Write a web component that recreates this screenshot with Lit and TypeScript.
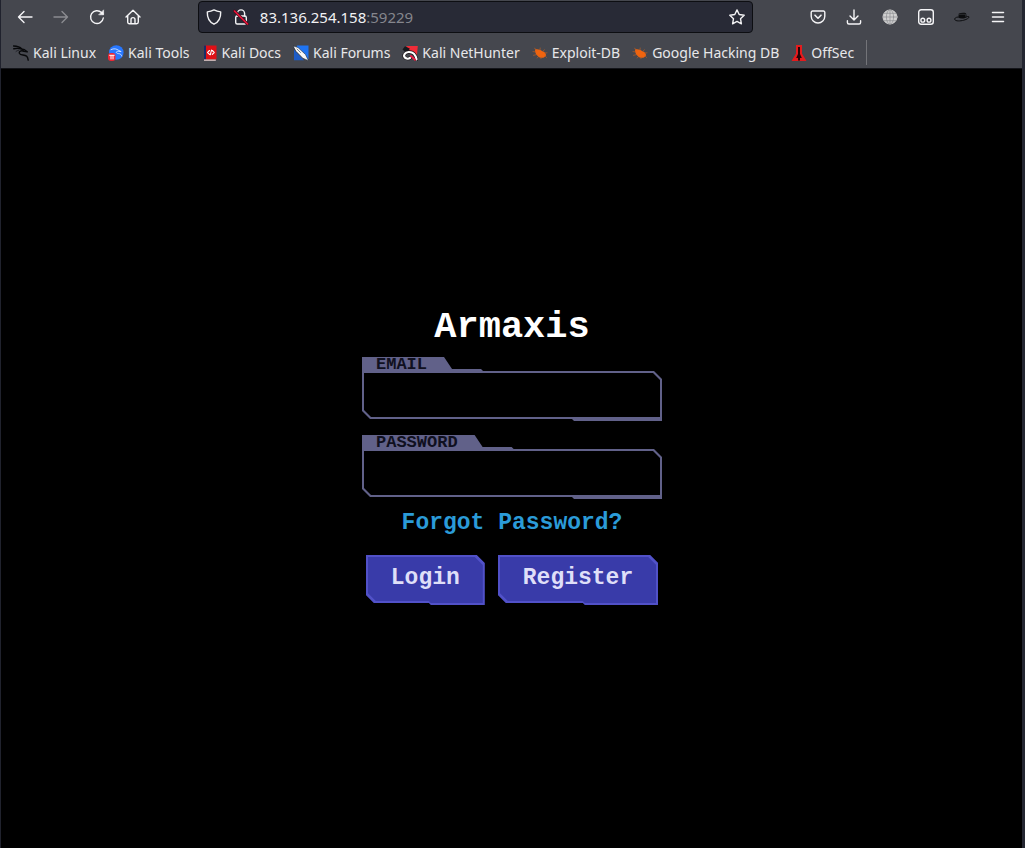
import { LitElement, html, css, svg } from "lit";
import { customElement, property } from "lit/decorators.js";

const line = (body: unknown) => html`<svg width="16" height="16" viewBox="0 0 16 16" fill="none" stroke="currentColor" stroke-width="1.4" stroke-linecap="round" stroke-linejoin="round" aria-hidden="true">${body}</svg>`;

const icons = {
  back: line(svg`<path d="M15 8H1.5M7 2.5 1.5 8 7 13.5"/>`),
  forward: line(svg`<path d="M1 8h13.5M9 2.5 14.5 8 9 13.5"/>`),
  reload: line(svg`<path d="M14.3 9A6.4 6.4 0 1 1 12.5 3.6L14 5"/><path d="M14.6 1.2v4.6H10z" fill="currentColor" stroke-width=".6"/>`),
  home: line(svg`<path d="M1 8 8 1.2 15 8M2.7 6.8V13a1.7 1.7 0 0 0 1.7 1.7h7.2a1.7 1.7 0 0 0 1.7-1.7V6.8M6 14.5V10.6a2 2 0 0 1 4 0v3.9"/>`),
  shield: line(svg`<path d="M8 .9c2.2 1.2 4.1 1.7 6.7 2C14.9 8.600 12.7 12.900 8 15.200 3.300 12.900 1.100 8.600 1.300 2.900 3.900 2.600 5.800 2.100 8 .9z"/>`),
  lock: line(svg`<path d="M4.400 7V4.500a3.600 3.600 0 0 1 7.200 0V7"/><rect x="2.700" y="7" width="10.600" height="8" rx="1.500"/><path d="M1.500 2 14.500 15" stroke="#45121f" stroke-width="3"/><path d="M1.500 2 14.500 15" stroke="#f0143c" stroke-width="1.500"/>`),
  star: line(svg`<path d="m8 .9 2.200 4.600 5 .7-3.700 3.500.9 5.100L8 12.400l-4.400 2.400.9-5.100L.8 6.200l5-.7z"/>`),
  pocket: line(svg`<path d="M2.500 2h11A1.300 1.300 0 0 1 14.800 3.300V7.200a6.800 6.800 0 0 1-13.600 0V3.300A1.300 1.300 0 0 1 2.500 2z"/><path d="m5 6.200 3 3 3-3" stroke-width="1.600"/>`),
  download: line(svg`<path d="M8 1v9.500M4 7l4 4 4-4M1.400 11.700v1.800a1.500 1.500 0 0 0 1.500 1.500h10.200a1.500 1.500 0 0 0 1.500-1.500v-1.800"/>`),
  globe: line(svg`<circle cx="8" cy="8" r="7" fill="#d0d0d0" stroke="#d0d0d0" stroke-width="1"/><g stroke="#8c8e92" stroke-width=".7"><ellipse cx="8" cy="8" rx="3.600" ry="7.200"/><path d="M8 .8v14.400M.8 8h14.400M2 4.300h12M2 11.700h12"/></g>`),
  tamper: line(svg`<rect x=".7" y=".7" width="14.600" height="14.600" rx="2.500"/><circle cx="4.800" cy="11.200" r="1.900"/><circle cx="11" cy="11.200" r="1.900"/>`),
  hat: line(svg`<path d="M4.300 8.800 4.800 4.600c2-.8 5-1 7.200-.4l.9 4c-2.500 1.600-6 1.700-8.600.6z" fill="#0c0d0f" stroke="none"/><path d="M4 8C1.500 8.200.3 9.500.8 10.600c.8 1.700 5.500 1.600 9 .6 3-.8 5.300-2.300 5.300-3.200 0-.5-.9-.6-2-.4" stroke="#0c0d0f" stroke-width="1"/><path d="M5.500 5.300h6.200v2" stroke="#3b3d42" stroke-width=".7"/>`),
  menu: line(svg`<path d="M2.500 3.500h11M2.500 8h11M2.500 12.500h11" stroke-width="1.500"/>`),
  dragon: line(svg`<g stroke="#08090b" stroke-width="1.400"><path d="M.5 1c3 .2 6 .4 8 2.800M.8 3.800c2.500-.6 5-.5 7.700.2M8.500 4l3 .8 2.800 2-3.300-.4C8.500 5 5.500 6.300 6.500 8.500c1 2 5 1 7 2.600 1 .9 1.500 2.500 1.700 4"/><path d="M3 6.500c1-.8 1.600-1 2.500-1.100" stroke-width=".6"/></g>`),
  tools: line(svg`<circle cx="8.300" cy="7.500" r="7.300" fill="#2777ff" stroke="none"/><path d="M3 4.600c3-1.500 5.700-.8 7.700.8l2.500 1.200-3-.3c-2.500 0-2.500 2 .2 2.300 2 .2 3 .9 3.400 2.500" stroke="#e8f0ff" stroke-width=".8"/><rect x="0" y="8" width="7.500" height="8" rx="3" fill="#ee2635" stroke="none"/><path d="M1.600 10.300h4.600M3 10.500v3.500M5 10.500v3.500" stroke="#fff" stroke-width="1"/>`),
  docs: line(svg`<rect x="2" y=".5" width="12.500" height="14" fill="#df1016" stroke="none"/><path d="M2 .5h2v14H2z" fill="#172e68" stroke="none"/><path d="M2 14.500h11.800v1.300H2z" fill="#e5cccb" stroke="none"/><path d="M7.500 5.500 5.600 7.500l1.900 1.900M9.500 5.100 8.300 9.800M10.300 5.500l1.900 2-1.900 1.900" stroke="#fff" stroke-width="1.100"/>`),
  forums: line(svg`<path d="M4 .5h11.500v13.500L13 15 3 4z" fill="#1f74f2" stroke="none"/><path d="M1 4.500v10.800h10z" fill="#1e5cc7" stroke="none"/><path d="M.3 1 5 2.500l7.500 7 3 6.200-5.700-2.500L3 6.300z" fill="#f8f8f8" stroke="#26313c" stroke-width=".6"/><path d="m4 4 3.500 3.500" stroke="#59646f" stroke-width=".8"/>`),
  nethunter: line(svg`<path d="M4 1h11.800L14.800 12 8 6z" fill="#f02c38" stroke="none"/><path d="M.5 4.500 3 1.200l5 2.600-4 4z" fill="#16191d" stroke="none"/><path d="M14.500 14.300C13.500 9.500 10.500 6.800 6.700 7 2.700 7.500 1 10.300 2.700 12.400c1.500 1.500 4 1.500 5.300.6" stroke="#191114" stroke-width="3.400"/><path d="M14.500 14.300C13.500 9.500 10.500 6.800 6.700 7 2.700 7.500 1 10.300 2.700 12.400c1.500 1.500 4 1.500 5.300.6" stroke="#fff" stroke-width="2.200"/><path d="m9 11 4 3.800" stroke="#e51e43" stroke-width="2"/>`),
  bug: line(svg`<path d="M3 4.500c2.500-.7 5.300 0 7 1.600l3 1.400 1.200 2.700-2.200 2.300c-2 .8-4.700.2-6-1.300C4 10 3 7.500 3 4.500z" fill="#f0640f" stroke="none"/><path d="M5 5 2.500 3.300M4 7 1 6.600M5 9.500l-3.500.8M7 11l-1.800 2M9.500 12l-.6 1.700M8 5.300 8.200 3M11 6.500l1.300-1.800M13 8l2-.2M13 11l1.600 1.500" stroke="#c9601f" stroke-width=".6"/>`),
  offsec: line(svg`<path d="M5 0h6v8.500l4.500 7.500H.5L5 8.500z" fill="#e31b1d" stroke="none"/><path d="M7 2h2v7l1.800 4H9v2.500H7V13H5.200L7 9z" fill="#250507" stroke="none"/>`),
};

@customElement("tool-button")
class ToolButton extends LitElement {
  @property() label = "";
  @property() icon: keyof typeof icons = "menu";
  @property({ type: Boolean }) disabled = false;
  static styles = css`
    :host { display: block; }
    button { display: grid; place-items: center; width: 36px; height: 34px; padding: 0; border: 0; background: none; color: #f5f5f7; }
    button:disabled { color: #8b8c91; }
    svg { display: block; }
  `;
  render() {
    return html`<button aria-label=${this.label} ?disabled=${this.disabled}>${icons[this.icon]}</button>`;
  }
}

@customElement("browser-chrome")
class BrowserChrome extends LitElement {
  static styles = css`
    :host { display: block; background: #45474e; color: #f2f2f4; font-family: "Noto Sans", sans-serif; border-bottom: 1px solid #14151a; }
    .toolbar { display: flex; padding: 0 6px; }
    .group { display: flex; }
    .space { flex: 48; }
    .address { flex: 553; display: flex; align-items: center; gap: 11px; height: 32px; margin-top: 1px; padding: 0 7px; box-sizing: border-box; border: 1px solid #0d0e12; border-radius: 4px; background: #282a36; }
    .address svg { display: block; flex: none; }
    .url { position: relative; flex: 1; display: flex; height: 24px; }
    .url input { width: 100%; padding: 0; border: 0; background: none; color: transparent; font: 15px/24px "Noto Sans", sans-serif; outline: 0; }
    .parts { position: absolute; inset: 0; font-size: 15px; line-height: 24px; pointer-events: none; }
    .port { color: #85868d; }
    .star { padding: 0; border: 0; background: none; color: inherit; }
    .bookmarks { display: flex; align-items: center; gap: 12px; height: 34px; padding: 3px 12px 0; box-sizing: border-box; white-space: nowrap; }
    .bookmarks a { display: flex; align-items: center; gap: 4px; color: #e8e8ea; text-decoration: none; font-size: 14px; line-height: 20px; }
    .divider { width: 1px; height: 25px; background: #737479; }
  `;
  private bookmarks: [keyof typeof icons, string][] = [
    ["dragon", "Kali Linux"], ["tools", "Kali Tools"], ["docs", "Kali Docs"], ["forums", "Kali Forums"],
    ["nethunter", "Kali NetHunter"], ["bug", "Exploit-DB"], ["bug", "Google Hacking DB"], ["offsec", "OffSec"],
  ];
  render() {
    return html`
      <div class="toolbar">
        <div class="group">
          <tool-button label="Back" icon="back"></tool-button>
          <tool-button label="Forward" icon="forward" disabled></tool-button>
          <tool-button label="Reload" icon="reload"></tool-button>
          <tool-button label="Home" icon="home"></tool-button>
        </div>
        <span class="space"></span>
        <div class="address">
          ${icons.shield}${icons.lock}
          <div class="url">
            <input aria-label="Address" />
            <span class="parts">83.136.254.158<span class="port">:59229</span></span>
          </div>
          <button class="star" aria-label="Bookmark this page">${icons.star}</button>
        </div>
        <span class="space"></span>
        <div class="group">
          <tool-button label="Save to Pocket" icon="pocket"></tool-button>
          <tool-button label="Downloads" icon="download"></tool-button>
          <tool-button label="Proxy" icon="globe"></tool-button>
          <tool-button label="Scripts" icon="tamper"></tool-button>
          <tool-button label="Hat extension" icon="hat"></tool-button>
          <tool-button label="Menu" icon="menu"></tool-button>
        </div>
      </div>
      <nav class="bookmarks">
        ${this.bookmarks.map(([icon, name]) => html`<a href="#">${icons[icon]}<span>${name}</span></a>`)}
        <span class="divider"></span>
      </nav>`;
  }
}

@customElement("framed-field")
class FramedField extends LitElement {
  @property() label = "";
  @property() type = "text";
  static styles = css`
    :host { display: block; }
    label {
      display: block; width: fit-content; height: 14px; padding: 0 56px 0 14px; background: #616189; color: #101020;
      font: bold 17px/16px "Liberation Mono", monospace; text-transform: uppercase;
      clip-path: polygon(0 0, calc(100% - 39px) 0, calc(100% - 31px) 12px, calc(100% - 2px) 12px, 100% 14px, 0 14px);
    }
    .frame {
      padding: 2px 2px 4px; background: #616189;
      clip-path: polygon(0 0, calc(100% - 8px) 0, 100% 8px, 100% 100%, calc(70% + 2px) 100%, 70% calc(100% - 2px), 8px calc(100% - 2px), 0 calc(100% - 10px));
    }
    input {
      display: block; box-sizing: border-box; width: 100%; height: 44px; padding: 0 14px; border: 0; outline: 0; border-radius: 0; background: #000; color: #e0e0ff;
      font: bold 17px/20px "Liberation Mono", monospace;
      clip-path: polygon(0 0, calc(100% - 7px) 0, 100% 7px, 100% 100%, 7px 100%, 0 calc(100% - 7px));
    }
  `;
  render() {
    return html`<label for="field">${this.label}</label><div class="frame"><input id="field" type=${this.type} /></div>`;
  }
}

@customElement("login-panel")
class LoginPanel extends LitElement {
  static styles = css`
    :host { display: block; width: 300px; font-family: "Liberation Mono", monospace; font-weight: bold; }
    form { display: flex; flex-direction: column; gap: 14px; }
    h1 { margin: 0; color: #fff; font-size: 37px; line-height: 31px; text-align: center; }
    .forgot { align-self: center; color: #2b9bd8; font-size: 23px; line-height: 20px; text-decoration: none; white-space: nowrap; }
    .actions { display: flex; justify-content: center; gap: 13px; padding-top: 8px; }
    .actions button {
      position: relative; isolation: isolate; height: 50px; padding: 0 25px 4px; border: 0; background: #5151c8; color: #dfdff8;
      font: bold 23px/24px "Liberation Mono", monospace;
    }
    .actions button::before { content: ""; position: absolute; inset: 2px; z-index: -1; background: #393ba9; }
    .actions button, .actions button::before {
      clip-path: polygon(0 0, calc(100% - 8px) 0, 100% 8px, 100% 100%, calc(53% + 2px) 100%, 53% calc(100% - 2px), 8px calc(100% - 2px), 0 calc(100% - 10px));
    }
  `;
  render() {
    return html`
      <form @submit=${(e: Event) => e.preventDefault()}>
        <h1>Armaxis</h1>
        <framed-field label="Email" type="email"></framed-field>
        <framed-field label="Password" type="password"></framed-field>
        <a class="forgot" href="#">Forgot Password?</a>
        <div class="actions"><button type="submit">Login</button><button type="button">Register</button></div>
      </form>`;
  }
}

@customElement("app-root")
class AppRoot extends LitElement {
  static styles = css`
    :host { display: flex; flex-direction: column; box-sizing: border-box; min-height: 100vh; background: #000; border-left: 1px solid #20222d; border-right: 3px solid #242631; }
    main { flex: 1; display: grid; place-items: center; padding-left: 1px; }
  `;
  render() {
    return html`<browser-chrome></browser-chrome><main><login-panel></login-panel></main>`;
  }
}
